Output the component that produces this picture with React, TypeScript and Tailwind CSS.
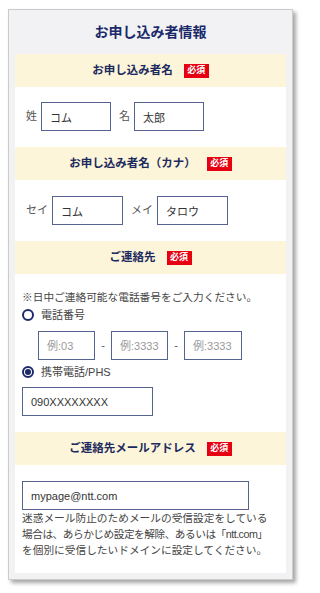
import React from 'react';

const font = { fontFamily: '"Liberation Sans", "Noto Sans CJK JP", sans-serif' };

const Required = () => (
  <span className="inline-flex h-[14px] w-[25px] items-center justify-center bg-[#e60012] text-[9px] font-bold leading-none text-white">
    必須
  </span>
);

const SectionHeader: React.FC<{ title: string }> = ({ title }) => (
  <div className="flex h-[33px] items-center justify-center gap-[11px] bg-[#fcf5da]">
    <span className="text-[11.5px] font-bold text-[#1c2a5e]">{title}</span>
    <Required />
  </div>
);

const Field: React.FC<{ value?: string; placeholder?: string; className: string }> = ({
  value,
  placeholder,
  className,
}) => (
  <input
    readOnly
    defaultValue={value}
    placeholder={placeholder}
    className={`h-[29px] border border-[#56628f] bg-white pl-[8px] text-[11px] text-[#333] outline-none placeholder:text-[#9a9a9a] ${className}`}
  />
);

const Radio: React.FC<{ checked?: boolean; label: string }> = ({ checked, label }) => (
  <label className="flex h-[16px] items-center gap-[7px]">
    <span className="flex h-[12px] w-[12px] items-center justify-center rounded-full border-2 border-[#1c2a6b]">
      {checked && <span className="h-[6px] w-[6px] rounded-full bg-[#1c2a6b]" />}
    </span>
    <span className="text-[11px] text-[#444]">{label}</span>
  </label>
);

export default function App() {
  return (
    <div className="min-h-screen bg-white pl-[8px] pt-[9px]" style={font}>
      <div className="w-[285px] border border-[#cbcbcb] bg-[#f2f2f4] px-[6px] pb-[6px] shadow-[3px_3px_4px_rgba(0,0,0,0.35)]">
        <h1 className="flex h-[44px] items-center justify-center text-[14px] font-bold text-[#1b2a6b]">
          お申し込み者情報
        </h1>

        {/* 氏名 */}
        <SectionHeader title="お申し込み者名" />
        <div className="flex items-center bg-white pb-[16px] pl-[11px] pt-[15px]">
          <span className="mr-[4px] text-[11px] text-[#555]">姓</span>
          <Field value="コム" className="mr-[8px] w-[70px]" />
          <span className="mr-[4px] text-[11px] text-[#555]">名</span>
          <Field value="太郎" className="w-[70px]" />
        </div>

        {/* カナ */}
        <SectionHeader title="お申し込み者名（カナ）" />
        <div className="flex items-center bg-white pb-[16px] pl-[11px] pt-[16px]">
          <span className="mr-[4px] text-[11px] text-[#555]">セイ</span>
          <Field value="コム" className="mr-[8px] w-[71px]" />
          <span className="mr-[4px] text-[11px] text-[#555]">メイ</span>
          <Field value="タロウ" className="w-[71px]" />
        </div>

        {/* 連絡先 */}
        <SectionHeader title="ご連絡先" />
        <div className="bg-white pb-[16px] pl-[7px] pt-[15px]">
          <p className="text-[10.7px] leading-[16px] text-[#444]">※日中ご連絡可能な電話番号をご入力ください。</p>
          <div className="mt-[2px]">
            <Radio label="電話番号" />
          </div>
          <div className="mt-[8px] flex items-center pl-[16px]">
            <Field placeholder="例:03" className="w-[57px]" />
            <span className="w-[16px] text-center text-[11px] text-[#555]">-</span>
            <Field placeholder="例:3333" className="w-[57px]" />
            <span className="w-[16px] text-center text-[11px] text-[#555]">-</span>
            <Field placeholder="例:3333" className="w-[58px]" />
          </div>
          <div className="mt-[4px]">
            <Radio checked label="携帯電話/PHS" />
          </div>
          <Field value="090XXXXXXXX" className="mt-[7px] block w-[131px]" />
        </div>

        {/* メール */}
        <SectionHeader title="ご連絡先メールアドレス" />
        <div className="bg-white pb-[15px] pl-[7px] pt-[16px]">
          <Field value="mypage@ntt.com" className="block w-[227px]" />
          <p className="whitespace-nowrap text-[10.7px] leading-[16px] text-[#444]">
            迷惑メール防止のためメールの受信設定をしている
            <br />
            <span className="tracking-[-0.5px]">場合は、あらかじめ設定を解除、あるいは「ntt.com」</span>
            <br />
            を個別に受信したいドメインに設定してください。
          </p>
        </div>
      </div>
    </div>
  );
}
